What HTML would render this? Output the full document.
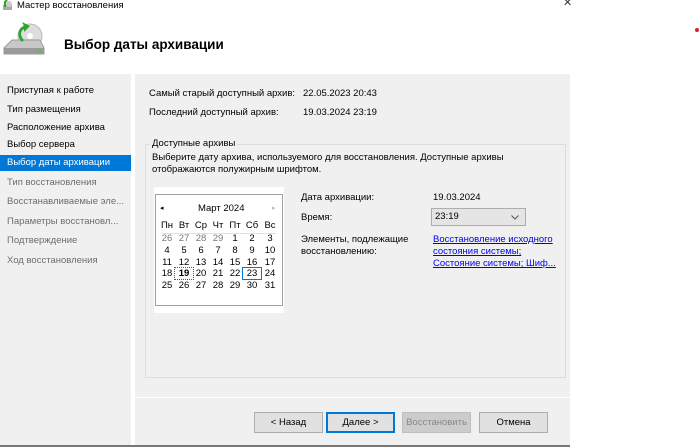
<!DOCTYPE html>
<html><head><meta charset="utf-8"><style>
*{margin:0;padding:0;box-sizing:border-box}
body{width:700px;height:447px;background:#fff;position:relative;overflow:hidden;font-family:"Segoe UI","Liberation Sans",sans-serif;font-size:9.5px;color:#000}
.a{position:absolute;white-space:nowrap}
.side div{position:absolute;left:7px;white-space:nowrap}
.g{color:#6d6d6d}
.cal span{position:absolute;width:18px;text-align:center}
.lnk{color:#0000ee;text-decoration:underline}
.btn{position:absolute;top:412px;height:21px;width:69px;background:#e1e1e1;border:1px solid #adadad;text-align:center;line-height:19px}
</style></head><body>
<svg class="a" style="left:2px;top:0" width="12" height="11"><rect x="1" y="5" width="9" height="5" fill="#aaa"/><circle cx="7" cy="4" r="3" fill="#ccc"/><path d="M3 7 V2 L5 0" stroke="#2a2" stroke-width="2" fill="none"/></svg>
<div class="a" style="left:17px;top:0px;font-size:9.5px">Мастер восстановления</div>
<div class="a" style="left:563px;top:-4px;font-size:11px;color:#333">✕</div>
<div class="a" style="left:695px;top:28px;width:4px;height:4px;border-radius:2px;background:#e02020"></div>
<svg class="a" style="left:0;top:18px" width="50" height="40">
<circle cx="30" cy="18" r="12" fill="#ddd" stroke="#bbb"/><circle cx="30" cy="18" r="3" fill="#fff"/>
<path d="M4 30 L12 22 H40 L44 30 V36 H4 Z" fill="#c8c8c8" stroke="#999"/><rect x="4" y="30" width="40" height="6" fill="#9a9a9a"/><rect x="38" y="32" width="4" height="2" fill="#4c4"/>
<path d="M22 24 C16 18 18 10 24 8 L22 4 L30 8 L24 14 L24 11 C20 13 20 18 24 22 Z" fill="#2aa52a"/>
</svg>
<div class="a" style="left:64px;top:37px;font-size:13.5px;font-weight:bold">Выбор даты архивации</div>
<div class="a side" style="left:0;top:74px;width:133px;height:371px;background:#f0f0f0;border-right:2px solid #fff">
<div style="top:11px">Приступая к работе</div>
<div style="top:30px">Тип размещения</div>
<div style="top:48px">Расположение архива</div>
<div style="top:65px">Выбор сервера</div>
<div style="top:81px;left:0;width:131px;height:16px;background:#0078d7;color:#fff;padding-left:7px;line-height:15px">Выбор даты архивации</div>
<div class="g" style="top:103px">Тип восстановления</div>
<div class="g" style="top:122px">Восстанавливаемые эле...</div>
<div class="g" style="top:142px">Параметры восстановл...</div>
<div class="g" style="top:161px">Подтверждение</div>
<div class="g" style="top:181px">Ход восстановления</div>
</div>
<div class="a" style="left:135px;top:74px;width:435px;height:371px;background:#f0f0f0"></div>
<div class="a" style="left:149px;top:88px">Самый старый доступный архив:</div>
<div class="a" style="left:303px;top:88px">22.05.2023 20:43</div>
<div class="a" style="left:149px;top:107px">Последний доступный архив:</div>
<div class="a" style="left:303px;top:107px">19.03.2024 23:19</div>
<div class="a" style="left:145px;top:144px;width:421px;height:234px;border:1px solid #dcdcdc"></div>
<div class="a" style="left:150px;top:138px;background:#f0f0f0;padding:0 2px">Доступные архивы</div>
<div class="a" style="left:152px;top:152px;line-height:12px">Выберите дату архива, используемого для восстановления. Доступные архивы<br>отображаются полужирным шрифтом.</div>
<div class="a" style="left:154px;top:187px;width:130px;height:126px;background:#fff"></div>
<div class="a cal" style="left:155px;top:194px;width:128px;height:112px;border:1px solid #a0a0a0;background:#fff">
<div class="a" style="left:4px;top:9px;font-size:7px">◂</div>
<div class="a" style="left:42px;top:8px">Март 2024</div>
<div class="a" style="left:116px;top:9px;font-size:7px;color:#bbb">▸</div>
<div class="a" style="left:0;top:0;width:128px">
<span style="left:2px;top:25px">Пн</span><span style="left:19px;top:25px">Вт</span><span style="left:36px;top:25px">Ср</span><span style="left:53px;top:25px">Чт</span><span style="left:70px;top:25px">Пт</span><span style="left:87px;top:25px">Сб</span><span style="left:105px;top:25px">Вс</span>
</div>
<div class="a" style="left:6px;top:38px;width:114px;border-top:1px solid #e0e0e0"></div>
<div id="days"></div>
</div>
<script>
var d=document.getElementById('days'),rows=[[26,27,28,29,1,2,3],[4,5,6,7,8,9,10],[11,12,13,14,15,16,17],[18,19,20,21,22,23,24],[25,26,27,28,29,30,31]],xs=[2,19,36,53,70,87,105],h='';
rows.forEach(function(r,i){r.forEach(function(n,j){var s='left:'+xs[j]+'px;top:'+(38+i*11.8)+'px;';if(i==0&&j<4)s+='color:#777;';if(i==3&&j==1)s+='font-weight:bold;outline:1px dotted #555;';if(i==3&&j==5)s+='outline:1px solid #0078d7;';h+='<span style="'+s+'">'+n+'</span>';});});
d.innerHTML=h;
</script>
<div class="a" style="left:301px;top:192px">Дата архивации:</div>
<div class="a" style="left:433px;top:192px">19.03.2024</div>
<div class="a" style="left:301px;top:212px">Время:</div>
<div class="a" style="left:431px;top:208px;width:95px;height:18px;background:#e5e5e5;border:1px solid #adadad;padding:2px 3px">23:19<svg style="position:absolute;right:6px;top:6px" width="8" height="5"><path d="M0.5 0.5 L4 4 L7.5 0.5" stroke="#555" fill="none"/></svg></div>
<div class="a" style="left:301px;top:234px;line-height:12px">Элементы, подлежащие<br>восстановлению:</div>
<div class="a lnk" style="left:433px;top:234px;line-height:12px">Восстановление исходного<br>состояния системы;<br>Состояние системы; Шиф...</div>
<div class="a" style="left:135px;top:397px;width:435px;border-top:1px solid #fff"></div>
<div class="btn" style="left:254px">&lt; Назад</div>
<div class="btn" style="left:326px;border:1px solid #0078d7;box-shadow:inset 0 0 0 1px #0078d7">Далее &gt;</div>
<div class="btn" style="left:402px;background:#ccc;border-color:#bfbfbf;color:#888">Восстановить</div>
<div class="btn" style="left:479px">Отмена</div>
<div class="a" style="left:0;top:445px;width:570px;height:2px;background:#777"></div>
</body></html>
